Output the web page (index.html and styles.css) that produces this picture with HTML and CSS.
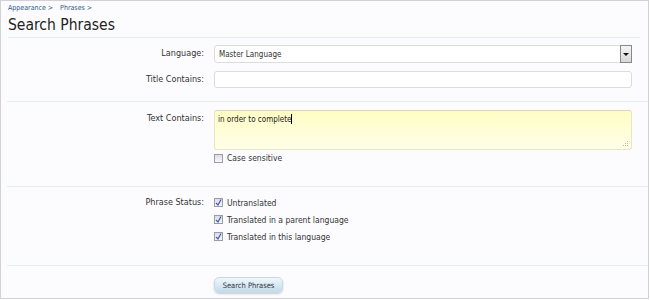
FILE: index.html
```html
<!DOCTYPE html>
<html lang="en">

<head>
    <meta charset="UTF-8">
    <title>Search Phrases</title>
    <link rel="stylesheet" href="styles.css">
</head>

<body>
    <div class="page">
        <div class="breadcrumb">
            <a href="#">Appearance</a> <span class="arrow">&gt;</span>
            <a href="#">Phrases</a> <span class="arrow">&gt;</span>
        </div>
        <h1 class="title">Search Phrases</h1>

        <div class="section first">
            <div class="row">
                <div class="label">Language:</div>
                <div class="select">
                    <span>Master Language</span>
                    <span class="drop"><i></i></span>
                </div>
            </div>
            <div class="row">
                <div class="label">Title Contains:</div>
                <div class="input"></div>
            </div>
        </div>

        <div class="section second">
            <div class="row">
                <div class="label">Text Contains:</div>
                <div class="field">
                    <div class="textarea">in order to complete<span class="caret"></span>
                        <svg class="grip" width="6" height="6" viewBox="0 0 6 6">
                            <rect x="4" y="0" width="1" height="1" fill="#b9b9a0"/>
                            <rect x="2" y="2" width="1" height="1" fill="#b9b9a0"/>
                            <rect x="4" y="2" width="1" height="1" fill="#b9b9a0"/>
                            <rect x="0" y="4" width="1" height="1" fill="#b9b9a0"/>
                            <rect x="2" y="4" width="1" height="1" fill="#b9b9a0"/>
                            <rect x="4" y="4" width="1" height="1" fill="#b9b9a0"/>
                        </svg>
                    </div>
                    <div class="check"><span class="box"></span>Case sensitive</div>
                </div>
            </div>
        </div>

        <div class="section third">
            <div class="row">
                <div class="label">Phrase Status:</div>
                <div class="field checks">
                    <div class="check"><span class="box on"><svg width="7" height="7" viewBox="0 0 7 7"><path d="M1 4 L3 6 L6 0.5" fill="none" stroke="#3a5fb0" stroke-width="1.2"/></svg></span>Untranslated</div>
                    <div class="check"><span class="box on"><svg width="7" height="7" viewBox="0 0 7 7"><path d="M1 4 L3 6 L6 0.5" fill="none" stroke="#3a5fb0" stroke-width="1.2"/></svg></span>Translated in a parent language</div>
                    <div class="check"><span class="box on"><svg width="7" height="7" viewBox="0 0 7 7"><path d="M1 4 L3 6 L6 0.5" fill="none" stroke="#3a5fb0" stroke-width="1.2"/></svg></span>Translated in this language</div>
                </div>
            </div>
        </div>

        <div class="section submit">
            <div class="row">
                <div class="label"></div>
                <button type="button" class="button">Search Phrases</button>
            </div>
        </div>
    </div>
</body>
</html>
```

FILE: styles.css
```css
* {
    margin: 0px;
    padding: 0px;
    box-sizing: border-box;
}

html,
body {
    width: 100%;
    height: 100%;
    background: #ffffff;
}

.page {
    width: 649px;
    height: 299px;
    border: 1px solid #d2d2d6;
    background: #fcfcff;
    font-family: "DejaVu Sans Condensed", "DejaVu Sans", sans-serif;
    font-size: 8px;
    color: #333333;
    overflow: hidden;
}

.breadcrumb {
    height: 11px;
    padding: 3px 0px 0px 7px;
    font-size: 7px;
    line-height: 8px;
    color: #2a5a8a;
}

.breadcrumb a {
    color: #2a5a8a;
    text-decoration: none;
}

.breadcrumb .arrow {
    color: #2a5a8a;
    margin-right: 5px;
}

.title {
    margin: 0px 8px 0px 7px;
    height: 26px;
    padding-top: 3px;
    font-size: 15.5px;
    line-height: 20px;
    font-weight: normal;
    color: #222222;
    border-bottom: 1px solid #e2eef4;
}

.section {
    border-bottom: 1px solid #e2f0f3;
    margin-left: 6px;
}

.section.first {
    height: 64px;
    padding-top: 7px;
}

.section.second {
    height: 85px;
    padding-top: 8px;
}

.section.third {
    height: 79px;
    padding-top: 7px;
}

.section.submit {
    border-bottom: none;
    padding-top: 10px;
}

.row {
    display: flex;
    gap: 10px;
    margin-bottom: 8px;
}

.label {
    width: 197px;
    text-align: right;
    line-height: 16px;
    font-size: 9px;
    flex-shrink: 0;
}

.select,
.input {
    width: 418px;
    height: 18px;
    border: 1px solid #dcdcdc;
    border-radius: 3px;
    background: #ffffff;
    display: flex;
    align-items: center;
    justify-content: space-between;
    padding-left: 4px;
}

.input {
    height: 17px;
}

.select .drop {
    width: 12px;
    height: 18px;
    margin-right: -1px;
    border: 1px solid #888888;
    background: linear-gradient(#f4f4f4, #d8d8d8);
    display: flex;
    align-items: center;
    justify-content: center;
}

.select .drop i {
    border-left: 3px solid transparent;
    border-right: 3px solid transparent;
    border-top: 3px solid #111111;
}

.field {
    width: 418px;
}

.textarea {
    position: relative;
    height: 40px;
    border: 1px solid #e6e6c8;
    border-top-color: #d8d8b8;
    border-radius: 3px;
    background: linear-gradient(#fffdc4, #fffee8);
    padding: 3px 3px;
    line-height: 10px;
    color: #222222;
}

.caret {
    display: inline-block;
    width: 1px;
    height: 10px;
    background: #000000;
    vertical-align: -2px;
}

.grip {
    position: absolute;
    right: 2px;
    bottom: 2px;
}

.check {
    display: flex;
    align-items: center;
    height: 14px;
    margin-top: 1px;
    font-size: 8.5px;
}

.checks .check {
    height: 17px;
    margin-top: 0px;
}

.box {
    width: 9px;
    height: 9px;
    border: 1px solid #9c9ca8;
    background: linear-gradient(#dcdce4, #f8f8fa);
    margin-right: 4px;
    display: flex;
    align-items: center;
    justify-content: center;
}

.button {
    width: 69px;
    height: 16px;
    margin-top: 1px;
    border: 1px solid #c6dbe8;
    border-radius: 5px;
    background: linear-gradient(#f0f7fb, #c2dcea);
    box-shadow: 0px 1px 2px rgba(0, 0, 0, 0.2);
    font-family: "DejaVu Sans Condensed", "DejaVu Sans", sans-serif;
    font-size: 7.5px;
    color: #333344;
}
```
